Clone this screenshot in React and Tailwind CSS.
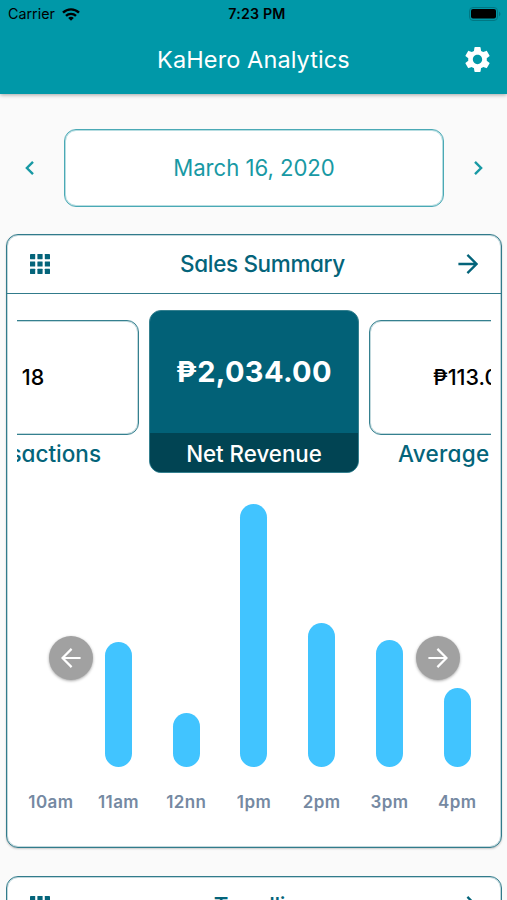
import clsx from "clsx";

const hours = [
    { label: "10am", height: 0 },
    { label: "11am", height: 125 },
    { label: "12nn", height: 54 },
    { label: "1pm", height: 263 },
    { label: "2pm", height: 144 },
    { label: "3pm", height: 127 },
    { label: "4pm", height: 79 },
];

function GridIcon() {
    return (
        <svg className="w-5 h-5" viewBox="0 0 20 20" fill="currentColor">
            {[0, 7.4, 14.8].map((y) =>
                [0, 7.4, 14.8].map((x) => (
                    <rect key={`${x}-${y}`} x={x} y={y} width="5.2" height="5.2" rx="0.4" />
                ))
            )}
        </svg>
    );
}

function ArrowIcon({ left, className }) {
    return (
        <svg
            className={clsx(className, left && "rotate-180")}
            viewBox="0 0 20 20"
            fill="none"
            stroke="currentColor"
        >
            <path d="M0.4 10H18.4M9.4 0.9L18.5 10L9.4 19.1" />
        </svg>
    );
}

function Chevron({ left }) {
    return (
        <svg
            className={clsx("w-[9px] h-[14px]", left && "rotate-180")}
            viewBox="0 0 9 14"
            fill="none"
            stroke="currentColor"
            strokeWidth="2.4"
        >
            <path d="M1 0.9L7.1 7L1 13.1" />
        </svg>
    );
}

function StatusBar() {
    return (
        <div className="h-7 grid grid-cols-3 items-center pl-2 pr-[6px] text-black">
            <div className="flex items-center gap-[7px]">
                <span className="text-[14.3px]">Carrier</span>
                <svg className="w-[18px] h-[13px]" viewBox="0 0 18 13" fill="none" stroke="currentColor" strokeWidth="2.4">
                    <path d="M1 4.7C5.5 0.3 12.5 0.3 17 4.7" />
                    <path d="M4 7.9C6.8 5.2 11.2 5.2 14 7.9" />
                    <path d="M9 12.7L6.2 9.9C7.8 8.5 10.2 8.5 11.8 9.9Z" fill="currentColor" stroke="none" />
                </svg>
            </div>
            <span className="pl-[5px] text-center text-[14.2px] tracking-[0.2px] font-semibold whitespace-nowrap">7:23 PM</span>
            <svg className="justify-self-end w-8 h-[14px]" viewBox="0 0 32 14">
                <rect x="0.5" y="0.5" width="28" height="13" rx="3.5" fill="none" stroke="#007783" />
                <rect x="2" y="2" width="25" height="9.6" rx="2" fill="#000" />
                <path d="M30 4.5Q33 7 30 9.5Z" fill="#007783" />
            </svg>
        </div>
    );
}

function Header() {
    return (
        <header className="h-[94px] shrink-0 bg-[#0098a8] shadow-[0_1px_4px_rgba(0,0,0,0.35)]">
            <StatusBar />
            <div className="h-16 grid grid-cols-[1fr_auto_1fr] items-center pr-4">
                <h1 className="col-start-2 pl-4 text-[23.5px] tracking-[0.1px] text-white whitespace-nowrap">KaHero Analytics</h1>
                <svg className="justify-self-end w-[31px] h-[31px] -mr-[2px] -mt-px text-white" viewBox="0 0 24 24" fill="currentColor">
                    <path d="M19.14 12.94c.04-.3.06-.61.06-.94 0-.32-.02-.64-.07-.94l2.03-1.58c.18-.14.23-.41.12-.61l-1.92-3.32c-.12-.22-.37-.29-.59-.22l-2.39.96c-.5-.38-1.03-.7-1.62-.94l-.36-2.54c-.04-.24-.24-.41-.48-.41h-3.84c-.24 0-.43.17-.47.41l-.36 2.54c-.59.24-1.13.57-1.62.94l-2.39-.96c-.22-.08-.47 0-.59.22L2.74 8.87c-.12.21-.08.47.12.61l2.03 1.58c-.05.3-.09.63-.09.94s.02.64.07.94l-2.03 1.58c-.18.14-.23.41-.12.61l1.92 3.32c.12.22.37.29.59.22l2.39-.96c.5.38 1.03.7 1.62.94l.36 2.54c.05.24.24.41.48.41h3.84c.24 0 .44-.17.47-.41l.36-2.54c.59-.24 1.13-.56 1.62-.94l2.39.96c.22.08.47 0 .59-.22l1.92-3.32c.12-.22.07-.47-.12-.61l-2.01-1.58zM12 15.6c-1.98 0-3.6-1.62-3.6-3.6s1.62-3.6 3.6-3.6 3.6 1.62 3.6 3.6-1.62 3.6-3.6 3.6z" />
                </svg>
            </div>
        </header>
    );
}

function DatePicker() {
    return (
        <div className="mt-[35px] shrink-0 flex items-center justify-between pl-[25px] pr-[24px] text-[#1899a4]">
            <button><Chevron left /></button>
            <div className="w-[380px] h-[78px] flex items-center justify-center rounded-xl border border-[#4aa9b5] bg-white text-[22.2px] tracking-[-0.05px] shadow-[inset_0_0_0_1px_rgba(74,169,181,0.4)]">
                March 16, 2020
            </div>
            <button><Chevron /></button>
        </div>
    );
}

function CardHeader({ title, titleClass }) {
    return (
        <div className="h-[58px] shrink-0 grid grid-cols-[1fr_auto_1fr] items-center pl-[23px] pr-[23px] text-[#04647a]">
            <GridIcon />
            <h2 className={clsx("pl-[17px] text-[22.5px] font-medium [font-feature-settings:'cv11']", titleClass)}>{title}</h2>
            <ArrowIcon className="justify-self-end w-5 h-5 stroke-[2.3]" />
        </div>
    );
}

function StatCard({ value, label, valueClass, labelClass }) {
    return (
        <div className="w-[210px] shrink-0 flex flex-col">
            <div className={clsx("h-[115px] flex items-center rounded-xl border border-[#35808f] text-[21.5px] font-medium text-black shadow-[inset_0_0_0_1px_rgba(53,128,143,0.3)]", valueClass)}>
                {value}
            </div>
            <div className={clsx("h-[38px] flex items-center text-[22.5px] font-medium text-[#04647a] whitespace-nowrap [font-feature-settings:'cv11']", labelClass)}>
                {label}
            </div>
        </div>
    );
}

function Stats() {
    return (
        <div className="ml-[10px] mr-[10px] mt-4 h-[163px] shrink-0 flex items-end justify-center gap-[10px] overflow-hidden">
            <StatCard value="18" label="Transactions" valueClass="justify-center pr-[2px]" labelClass="justify-end pr-[38px]" />
            <div className="w-[210px] h-[163px] shrink-0 flex flex-col rounded-xl overflow-hidden border border-[#35808f] bg-[#026177] text-white">
                <div className="flex-1 flex items-center justify-center text-[29px] tracking-[0.35px] font-bold">₱2,034.00</div>
                <div className="h-[39px] pt-[2px] flex items-center justify-center bg-[#014453] text-[22.3px] font-medium [font-feature-settings:'cv11']">
                    Net Revenue
                </div>
            </div>
            <StatCard value="₱113.00" label="Average Sales" valueClass="pl-[63px]" labelClass="pl-[29px] tracking-[0.3px]" />
        </div>
    );
}

function ScrollButton({ left, className }) {
    return (
        <button
            className={clsx(
                "absolute top-[163px] w-11 h-11 rounded-full flex items-center justify-center bg-[#a1a1a1] text-white shadow-[0_1px_3px_rgba(0,0,0,0.35)]",
                className
            )}
        >
            <ArrowIcon left={left} className="w-5 h-5 stroke-[2.2]" />
        </button>
    );
}

function HourlyChart() {
    return (
        <div className="relative h-[340px] shrink-0">
            <div className="h-full grid grid-cols-7 px-[10px]">
                {hours.map((hour) => (
                    <div key={hour.label} className="flex flex-col items-center">
                        <div className="h-[294px] flex items-end">
                            <div className="w-[27px] rounded-full bg-[#41c4ff]" style={{ height: hour.height }} />
                        </div>
                        <span className="mt-[23px] text-[17px] leading-6 tracking-[0.4px] font-semibold text-[#7589a2]">{hour.label}</span>
                    </div>
                ))}
            </div>
            <ScrollButton left className="left-[42px]" />
            <ScrollButton className="right-[41px]" />
        </div>
    );
}

export default function App() {
    return (
        <div className="w-full h-[900px] flex flex-col overflow-hidden bg-[#fafafa] font-['Inter','Noto_Sans',sans-serif]">
            <Header />
            <DatePicker />
            <section className="ml-[6px] mr-[5px] mt-[27px] h-[614px] shrink-0 flex flex-col rounded-xl border border-[#317b8b] bg-white shadow-[0_1px_2px_rgba(0,0,0,0.2),inset_0_0_0_1px_rgba(49,123,139,0.3)]">
                <CardHeader title="Sales Summary" titleClass="tracking-[-0.35px]" />
                <div className="h-px shrink-0 bg-[#317b8b]" />
                <Stats />
                <HourlyChart />
            </section>
            <section className="ml-[6px] mr-[5px] mt-7 h-[614px] shrink-0 rounded-xl border border-[#317b8b] bg-white shadow-[inset_0_0_0_1px_rgba(49,123,139,0.3)]">
                <CardHeader title="Trendline" titleClass="tracking-[-0.35px]" />
            </section>
        </div>
    );
}
